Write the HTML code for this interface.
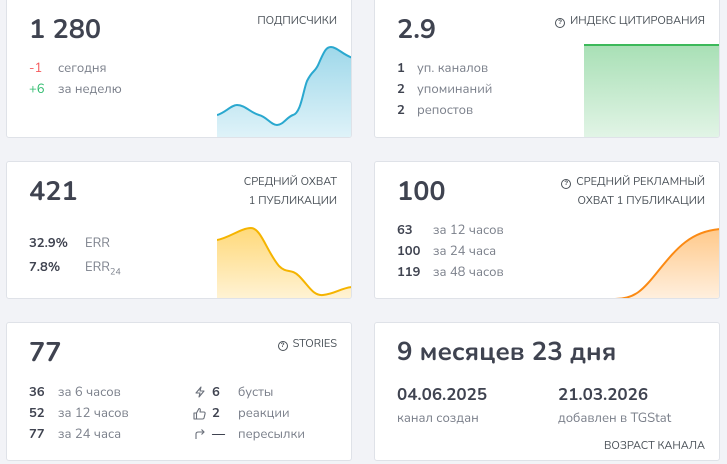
<!DOCTYPE html>
<html><head><meta charset="utf-8"><style>
body{margin:0;width:727px;height:464px;background:#f2f3f7;font-family:"Nunito","Liberation Sans",sans-serif;color:#3f4350;position:relative;overflow:hidden}
.c{position:absolute;background:#fff;border:1px solid #dfe2e8;border-radius:3px;box-sizing:border-box;overflow:hidden}
.a{position:absolute;white-space:nowrap}
.big{font-size:27px;font-weight:bold;color:#3f4350}
.lab{font-size:11px;color:#495057;text-align:right;line-height:19px}
.r{font-size:13px;color:#7a7f8a}
.n{font-size:13px;font-weight:bold;color:#3f4350}
.q{display:inline-block;width:8px;height:8px;border:1.3px solid #495057;border-radius:50%;font-size:6.5px;line-height:8px;text-align:center;vertical-align:0px;margin-right:5px;font-weight:bold;font-family:"Liberation Sans",sans-serif}
svg{position:absolute}
</style></head><body>

<div class="c" style="left:6px;top:-4px;width:346px;height:142px">
<div class="a big" style="left:22px;top:14px">1 280</div>
<div class="a lab" style="right:14px;top:14px">ПОДПИСЧИКИ</div>
<div class="a r" style="left:22px;top:62px;color:#f5585b">-1</div><div class="a r" style="left:51px;top:62px">сегодня</div>
<div class="a r" style="left:22px;top:83px;color:#2dbb6c">+6</div><div class="a r" style="left:51px;top:83px">за неделю</div>
<svg style="left:210px;top:4px" width="136" height="138"><defs><linearGradient id="g1" x1="0" y1="0" x2="0" y2="1"><stop offset="0" stop-color="#9fd8ea"/><stop offset="1" stop-color="#e0f3f9"/></linearGradient></defs>
<path d="M0,114 C8,112 14,104 20,104 C28,104 34,112 42,114 C50,116 54,124 60,124 C66,124 70,116 76,114 C84,112 86,90 90,80 C96,68 98,72 102,62 C108,48 110,46 114,46 C120,46 126,54 136,57 L136,138 L0,138Z" fill="url(#g1)"/>
<path d="M0,114 C8,112 14,104 20,104 C28,104 34,112 42,114 C50,116 54,124 60,124 C66,124 70,116 76,114 C84,112 86,90 90,80 C96,68 98,72 102,62 C108,48 110,46 114,46 C120,46 126,54 136,57" fill="none" stroke="#2aa8cf" stroke-width="2"/></svg>
</div>

<div class="c" style="left:374px;top:-4px;width:346px;height:142px">
<div class="a big" style="left:22px;top:14px">2.9</div>
<div class="a lab" style="right:14px;top:14px"><span class="q">?</span>ИНДЕКС ЦИТИРОВАНИЯ</div>
<div class="a n" style="left:22px;top:62px">1</div><div class="a r" style="left:42px;top:62px">уп. каналов</div>
<div class="a n" style="left:22px;top:83px">2</div><div class="a r" style="left:42px;top:83px">упоминаний</div>
<div class="a n" style="left:22px;top:104px">2</div><div class="a r" style="left:42px;top:104px">репостов</div>
<div class="a" style="left:209px;top:47px;width:137px;height:95px;background:linear-gradient(#a9e0b6,#e4f5e8);border-top:2px solid #3cb95a"></div>
</div>

<div class="c" style="left:6px;top:161px;width:346px;height:138px">
<div class="a big" style="left:22px;top:11px">421</div>
<div class="a lab" style="right:14px;top:10px">СРЕДНИЙ ОХВАТ<br>1 ПУБЛИКАЦИИ</div>
<div class="a n" style="left:22px;top:72px">32.9%</div><div class="a r" style="left:78px;top:72px">ERR</div>
<div class="a n" style="left:22px;top:96px">7.8%</div><div class="a r" style="left:78px;top:96px">ERR<sub style="font-size:9px">24</sub></div>
<svg style="left:210px;top:60px" width="136" height="78"><defs><linearGradient id="g2" x1="0" y1="0" x2="0" y2="1"><stop offset="0" stop-color="#ffd97a"/><stop offset="1" stop-color="#fff3d6"/></linearGradient></defs>
<path d="M0,18 C12,16 24,6 34,6 C44,6 50,30 62,44 C70,52 74,46 82,54 C92,64 96,74 106,73 C118,72 126,65 136,65 L136,78 L0,78Z" fill="url(#g2)"/>
<path d="M0,18 C12,16 24,6 34,6 C44,6 50,30 62,44 C70,52 74,46 82,54 C92,64 96,74 106,73 C118,72 126,65 136,65" fill="none" stroke="#f5b400" stroke-width="2"/></svg>
</div>

<div class="c" style="left:374px;top:161px;width:346px;height:138px">
<div class="a big" style="left:22px;top:11px">100</div>
<div class="a lab" style="right:14px;top:10px"><span class="q">?</span>СРЕДНИЙ РЕКЛАМНЫЙ<br>ОХВАТ 1 ПУБЛИКАЦИИ</div>
<div class="a n" style="left:22px;top:59px">63</div><div class="a r" style="left:58px;top:59px">за 12 часов</div>
<div class="a n" style="left:22px;top:80px">100</div><div class="a r" style="left:58px;top:80px">за 24 часа</div>
<div class="a n" style="left:22px;top:101px">119</div><div class="a r" style="left:58px;top:101px">за 48 часов</div>
<svg style="left:210px;top:60px" width="136" height="78"><defs><linearGradient id="g3" x1="0" y1="0" x2="0" y2="1"><stop offset="0" stop-color="#ffc98a"/><stop offset="1" stop-color="#fff0e0"/></linearGradient></defs>
<path d="M0,77 L30,77 C50,77 58,68 74,48 C92,26 106,9 136,7 L136,78 L0,78Z" fill="url(#g3)"/>
<path d="M0,77 L30,77 C50,77 58,68 74,48 C92,26 106,9 136,7" fill="none" stroke="#fb8a14" stroke-width="2"/></svg>
</div>

<div class="c" style="left:6px;top:322px;width:346px;height:139px">
<div class="a big" style="left:22px;top:11px">77</div>
<div class="a lab" style="right:14px;top:11px"><span class="q">?</span>STORIES</div>
<div class="a n" style="left:22px;top:60px">36</div><div class="a r" style="left:51px;top:60px">за 6 часов</div>
<div class="a n" style="left:22px;top:81px">52</div><div class="a r" style="left:51px;top:81px">за 12 часов</div>
<div class="a n" style="left:22px;top:102px">77</div><div class="a r" style="left:51px;top:102px">за 24 часа</div>
<svg style="left:187px;top:63px" width="12" height="12"><path d="M7,1 L2,7 H6 L5,11 L10,5 H6 Z" fill="none" stroke="#6a6f7a" stroke-width="1.1" stroke-linejoin="round"/></svg>
<div class="a n" style="left:205px;top:60px">6</div><div class="a r" style="left:231px;top:60px">бусты</div>
<svg style="left:186px;top:84px" width="13" height="13"><path d="M1,6 H3.5 V12 H1 Z M3.5,6 L6,1.5 C7.5,1.5 7.5,3 7,5 H11 C12,5 12.3,6 12,7 L11,11 C10.8,11.7 10.3,12 9.5,12 H3.5" fill="none" stroke="#6a6f7a" stroke-width="1.1" stroke-linejoin="round"/></svg>
<div class="a n" style="left:205px;top:81px">2</div><div class="a r" style="left:231px;top:81px">реакции</div>
<svg style="left:187px;top:105px" width="12" height="12"><path d="M2,11 V6 C2,4.5 3,4 4.5,4 H10 M7.5,1.5 L10,4 L7.5,6.5" fill="none" stroke="#6a6f7a" stroke-width="1.1"/></svg>
<div class="a n" style="left:205px;top:102px">—</div><div class="a r" style="left:231px;top:102px">пересылки</div>
</div>

<div class="c" style="left:374px;top:322px;width:346px;height:139px">
<div class="a big" style="left:22px;top:12px;font-size:26px">9 месяцев 23 дня</div>
<div class="a" style="left:22px;top:61px;font-size:17px;font-weight:bold">04.06.2025</div>
<div class="a r" style="left:22px;top:86px">канал создан</div>
<div class="a" style="left:183px;top:61px;font-size:17px;font-weight:bold">21.03.2026</div>
<div class="a r" style="left:183px;top:86px">добавлен в TGStat</div>
<div class="a lab" style="right:14px;top:113px">ВОЗРАСТ КАНАЛА</div>
</div>
</body></html>
